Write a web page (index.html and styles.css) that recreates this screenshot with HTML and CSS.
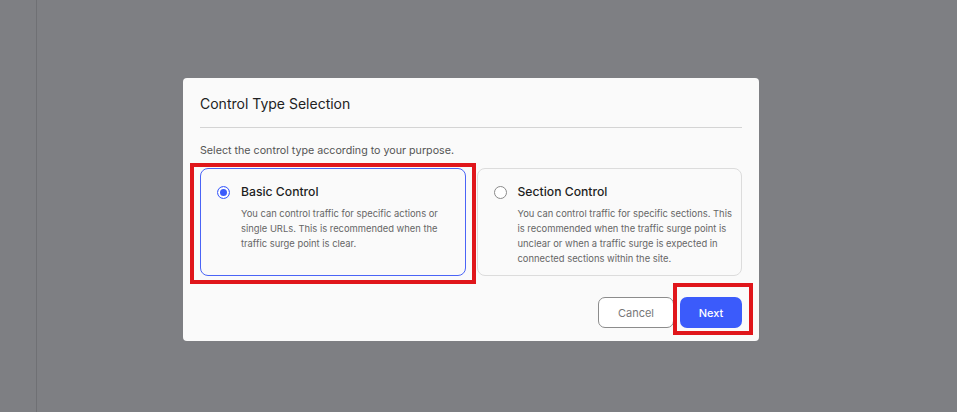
FILE: index.html
```html
<!DOCTYPE html>
<html lang="en">
<head>
<meta charset="utf-8">
<title>Control Type Selection</title>
<link rel="stylesheet" href="styles.css">
</head>
<body>
<div class="page">
  <aside class="sidebar"></aside>
  <main class="main">
    <section class="modal">
      <header class="modal-header">
        <h2 class="modal-title">Control Type Selection</h2>
      </header>
      <p class="modal-sub">Select the control type according to your purpose.</p>
      <div class="options">
        <label class="option option-selected">
          <span class="radio radio-on"></span>
          <span class="option-body">
            <span class="option-title">Basic Control</span>
            <span class="option-desc">You can control traffic for specific actions or single URLs. This is recommended when the traffic surge point is clear.</span>
          </span>
        </label>
        <label class="option">
          <span class="radio"></span>
          <span class="option-body">
            <span class="option-title">Section Control</span>
            <span class="option-desc">You can control traffic for specific sections. This is recommended when the traffic surge point is unclear or when a traffic surge is expected in connected sections within the site.</span>
          </span>
        </label>
      </div>
      <footer class="modal-footer">
        <button class="btn btn-cancel">Cancel</button>
        <button class="btn btn-next">Next</button>
      </footer>
    </section>
  </main>
</div>
<div class="mark mark-basic"></div>
<div class="mark mark-next"></div>
</body>
</html>
```

FILE: styles.css
```css
* { box-sizing: border-box; }
html, body { margin: 0; padding: 0; }
body {
  width: 957px;
  height: 412px;
  overflow: hidden;
  background: #7e7f83;
  font-family: Inter, "Noto Sans", "Liberation Sans", sans-serif;
  position: relative;
}
.page {
  display: flex;
  height: 412px;
}
.sidebar {
  width: 37px;
  border-right: 1px solid #6f7074;
  flex: none;
}
.main {
  flex: 1;
  padding-top: 78px;
  padding-left: 146px;
}
.modal {
  width: 576px;
  height: 263px;
  background: #fafafa;
  border-radius: 4px;
  padding: 0 17px 13px 17px;
  display: flex;
  flex-direction: column;
}
.modal-header {
  padding-top: 16px;
  padding-bottom: 13px;
  border-bottom: 1px solid #d4d4d4;
}
.modal-title {
  margin: 0;
  font-size: 14px;
  line-height: 20px;
  font-weight: 400;
  color: #222;
}
.modal-sub {
  margin: 14px 0 9px 0;
  font-size: 10.7px;
  line-height: 17px;
  color: #555;
}
.options {
  display: flex;
  gap: 11px;
}
.option {
  flex: 1;
  display: flex;
  align-items: flex-start;
  border: 1px solid #dcdcdc;
  border-radius: 8px;
  padding: 14px 4px 11px 16px;
  height: 108px;
  background: #fafafa;
}
.option-selected {
  border-color: #4a64f6;
}
.radio {
  flex: none;
  width: 13px;
  height: 13px;
  border-radius: 50%;
  border: 1px solid #8a8a8a;
  margin-top: 3px;
  margin-right: 11px;
  background: #fff;
}
.radio-on {
  border-color: #3b5bfb;
  box-shadow: inset 0 0 0 2px #fff, inset 0 0 0 6px #3b5bfb;
}
.option-body {
  display: flex;
  flex-direction: column;
}
.option-title {
  font-size: 12.2px;
  line-height: 18px;
  font-weight: 500;
  color: #1e1e1e;
}
.option-desc {
  margin-top: 5px;
  font-size: 9.4px;
  line-height: 15px;
  color: #666;
}
.modal-footer {
  margin-top: auto;
  display: flex;
  justify-content: flex-end;
  gap: 6px;
}
.btn {
  height: 31px;
  border-radius: 7px;
  font-family: inherit;
  font-size: 11px;
  cursor: pointer;
}
.btn-cancel {
  width: 76px;
  background: #fff;
  border: 1px solid #8c8c8c;
  color: #777;
}
.btn-next {
  width: 62px;
  background: #3b5bfb;
  border: none;
  color: #fff;
  font-weight: 500;
}
.mark {
  position: absolute;
  border: 4px solid #e0161b;
  pointer-events: none;
}
.mark-basic {
  left: 190px;
  top: 163px;
  width: 286px;
  height: 121px;
}
.mark-next {
  left: 673px;
  top: 283px;
  width: 80px;
  height: 52px;
}
```
